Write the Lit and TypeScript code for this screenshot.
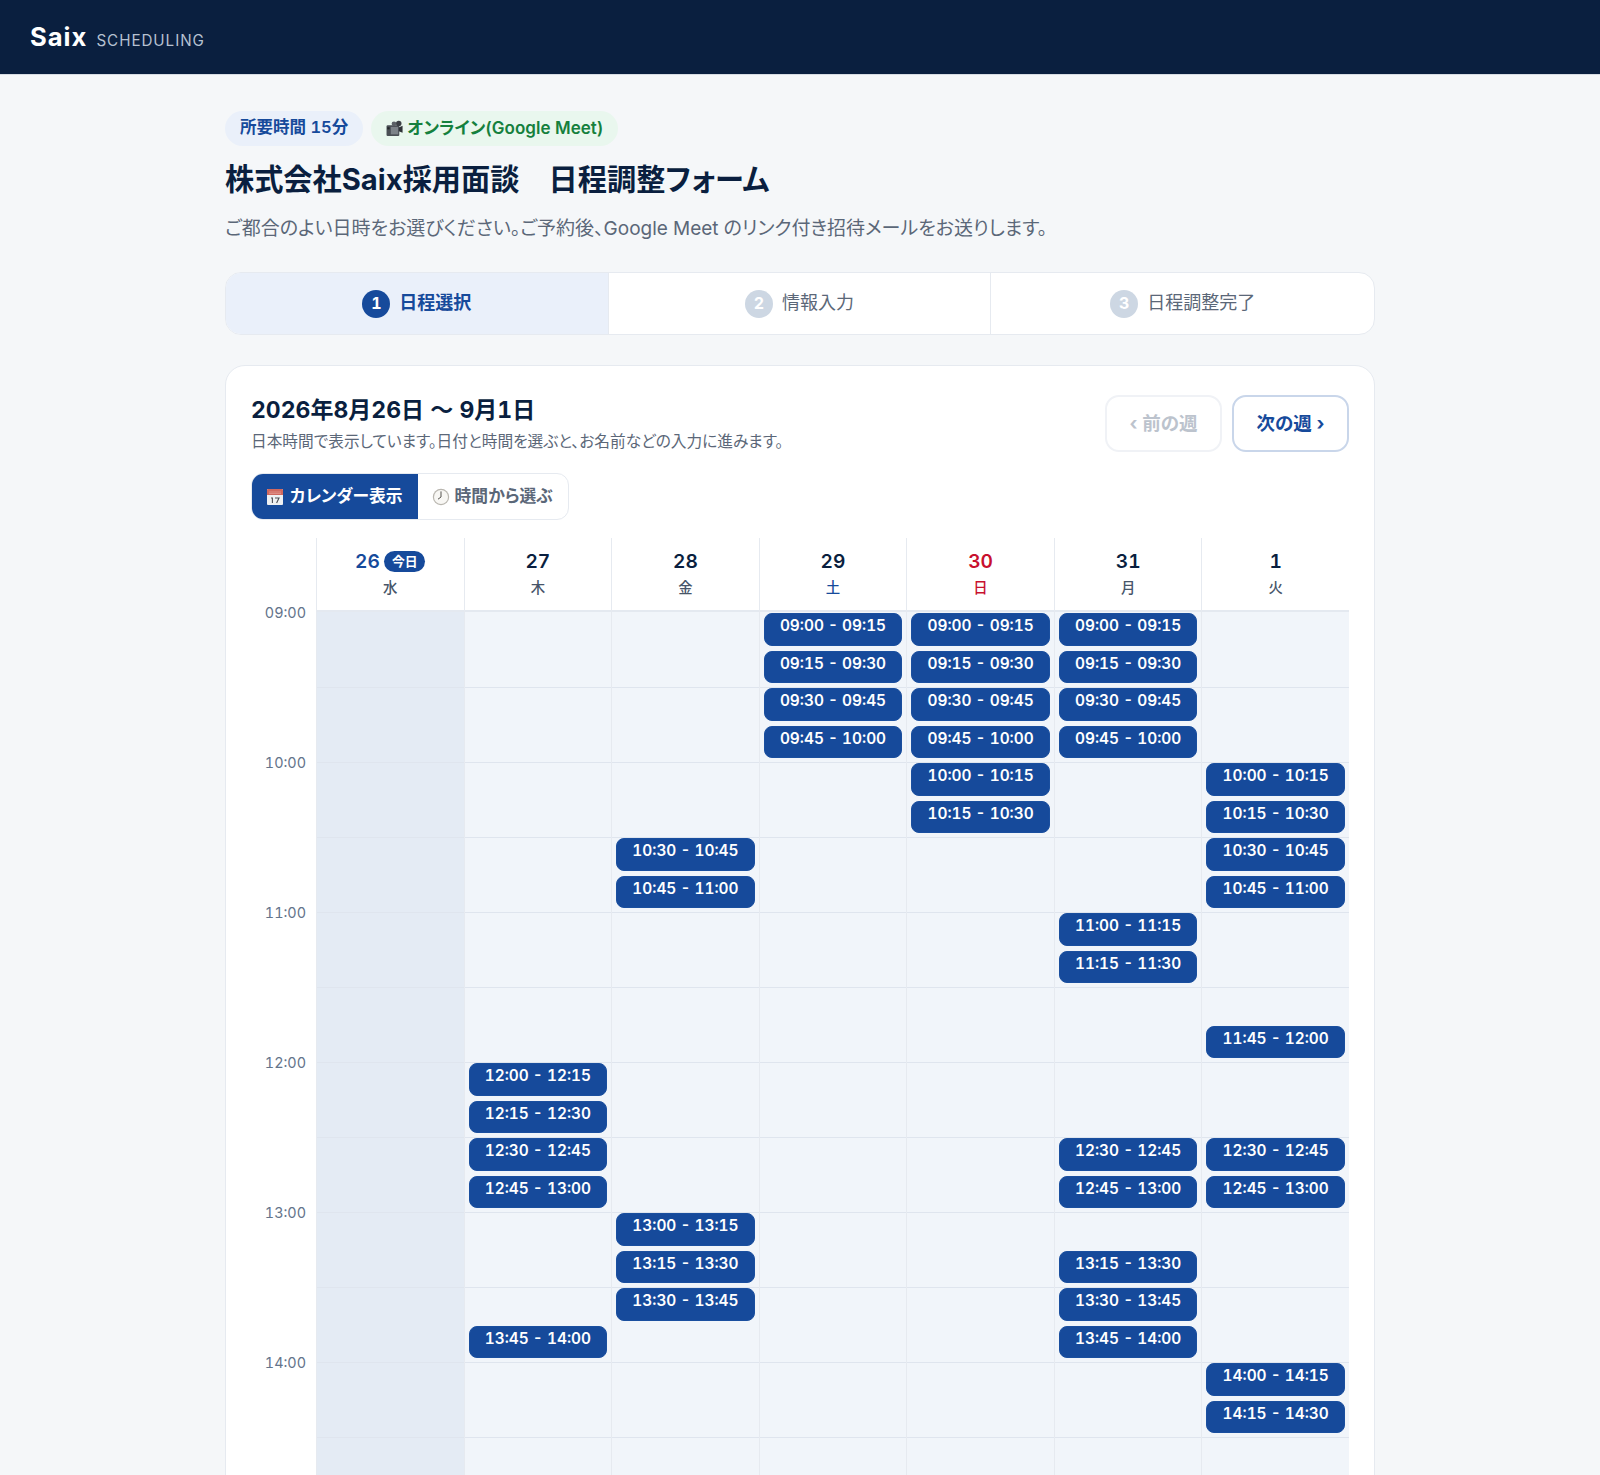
import { LitElement, html, css, svg, nothing } from "lit";
import { customElement } from "lit/decorators.js";

const SLOT_COUNT = 24;
const START_MIN = 9 * 60;
const fmt = (m: number) =>
  `${String(Math.floor(m / 60)).padStart(2, "0")}:${String(m % 60).padStart(2, "0")}`;
const idx = (t: string) => {
  const [h, m] = t.split(":").map(Number);
  return (h * 60 + m - START_MIN) / 15;
};

const days = [
  { n: "26", w: "水", kind: "today", slots: [] as string[] },
  { n: "27", w: "木", kind: "", slots: ["12:00", "12:15", "12:30", "12:45", "13:45"] },
  { n: "28", w: "金", kind: "", slots: ["10:30", "10:45", "13:00", "13:15", "13:30"] },
  { n: "29", w: "土", kind: "sat", slots: ["09:00", "09:15", "09:30", "09:45"] },
  { n: "30", w: "日", kind: "sun", slots: ["09:00", "09:15", "09:30", "09:45", "10:00", "10:15"] },
  { n: "31", w: "月", kind: "", slots: ["09:00", "09:15", "09:30", "09:45", "11:00", "11:15", "12:30", "12:45", "13:15", "13:30", "13:45"] },
  { n: "1", w: "火", kind: "", slots: ["10:00", "10:15", "10:30", "10:45", "11:45", "12:30", "12:45", "14:00", "14:15"] },
];

const cameraIcon = svg`<svg class="emoji" viewBox="0 0 16 16" width="17" height="17" aria-hidden="true">
  <rect x="0.5" y="5" width="12" height="10" rx="1" fill="#4a4f55"/>
  <rect x="4.5" y="6.5" width="7" height="7" fill="#7c8288"/>
  <circle cx="12" cy="3.2" r="2.6" fill="#3c4046"/>
  <circle cx="7.5" cy="3.6" r="2.2" fill="#5b6066"/>
  <path d="M12 7l3.6-1.5v6.5L12 10.5z" fill="#2f3338"/>
  <rect x="1.2" y="6.8" width="2.2" height="2" fill="#23262a"/>
</svg>`;
const calendarIcon = svg`<svg class="emoji" viewBox="0 0 18 18" width="18" height="18" aria-hidden="true">
  <rect x="1" y="1" width="16" height="16" rx="1" fill="#eef0f2"/>
  <path d="M1 2a1 1 0 0 1 1-1h14a1 1 0 0 1 1 1v5H1z" fill="#d0685f"/>
  <path d="M3 4h12M3 5.5h12" stroke="#e8a49e" stroke-width=".6"/>
  <path d="M5 10h1.4v5M9 10h4l-2.4 5" fill="none" stroke="#4c4f54" stroke-width="1.1"/>
</svg>`;
const clockIcon = svg`<svg class="emoji" viewBox="0 0 18 18" width="18" height="18" aria-hidden="true">
  <circle cx="9" cy="9" r="8.2" fill="#b9b6af"/>
  <circle cx="9" cy="9" r="7" fill="#f8f7f4"/>
  <path d="M9 9V3.4M9 9L6 11.2" stroke="#55534f" stroke-width="1" fill="none"/>
</svg>`;

@customElement("app-root")
export class AppRoot extends LitElement {
  static styles = css`
    :host {
      display: block;
      height: 1475px;
      overflow: hidden;
      background: #f5f7f9;
      color: #0a1f3f;
      font-family: "Inter", "Noto Sans CJK JP", sans-serif;
      font-feature-settings: "palt", "tnum";
    }
    * { box-sizing: border-box; }
    .top {
      height: 75px;
      background: #0a1f3f;
      border-bottom: 1px solid #d7dce3;
      display: flex;
      align-items: baseline;
      gap: 9px;
      padding: 20px 30px 0;
    }
    .logo { color: #fff; font-size: 25.6px; font-weight: 700; letter-spacing: 1px; line-height: 34px; }
    .sub { color: #b6c1d1; font-size: 15.2px; letter-spacing: 0.95px; }
    main {
      width: 1150px;
      margin: 0 auto;
      padding-top: 36px;
      display: flex;
      flex-direction: column;
    }
    .pills { display: flex; gap: 8px; }
    .pill {
      height: 35px;
      border-radius: 18px;
      padding: 0 15px 5px;
      display: flex;
      align-items: center;
      gap: 4px;
      font-size: 16.5px;
      font-weight: 600;
    }
    .pill .emoji { margin-top: 5px; }
    .pill.blue { background: #eaf0fa; color: #164a9b; }
    .pill.green { background: #e9f7ee; color: #15803d; font-size: 17px; }
    h1 {
      margin: 13px 0 0;
      font-size: 29.2px;
      line-height: 42px;
      font-weight: 700;
    }
    .lead { margin: 14px 0 0; font-size: 19px; line-height: 28px; color: #5b6778; }
    .steps {
      margin-top: 29px;
      height: 63px;
      display: grid;
      grid-template-columns: repeat(3, 1fr);
      background: #fff;
      border: 1px solid #e6eaf0;
      border-radius: 16px;
      overflow: hidden;
    }
    .step {
      display: flex;
      align-items: center;
      justify-content: center;
      gap: 9px;
      font-size: 18px;
      color: #5b6778;
      border-right: 1px solid #e6eaf0;
      line-height: 24px;
    }
    .step > b { font-weight: inherit; margin-top: -2px; }
    .step:last-child { border-right: 0; }
    .step.on { background: #eaf0fa; color: #164a9b; font-weight: 700; }
    .num {
      width: 28px;
      height: 28px;
      border-radius: 50%;
      background: #cdd7e3;
      color: #fff;
      font-size: 16px;
      font-weight: 700;
      padding-bottom: 2px;
      display: flex;
      align-items: center;
      justify-content: center;
    }
    .step.on .num { background: #164a9b; }
    .card {
      margin-top: 30px;
      background: #fff;
      border: 1px solid #e6eaf0;
      border-radius: 20px;
      padding: 29px 25px 25px;
    }
    .head { display: flex; justify-content: space-between; align-items: flex-start; }
    h2 { margin: 0; font-size: 23px; line-height: 30px; font-weight: 700; }
    .note { margin: 6px 0 0; font-size: 15.7px; line-height: 22px; color: #5b6778; }
    .nav { display: flex; gap: 10px; }
    .nav button {
      width: 117px;
      height: 57px;
      border-radius: 14px;
      background: #fff;
      border: 2px solid #c9d6ea;
      color: #164a9b;
      font: inherit;
      font-size: 18.5px;
      font-weight: 700;
      padding: 0 0 4px;
    }
    .nav button[disabled] { border-color: #f0f2f6; color: #bcc3cd; }
    .toggle {
      margin-top: 20px;
      display: inline-flex;
      height: 47px;
      border: 1px solid #e6eaf0;
      border-radius: 12px;
      overflow: hidden;
      vertical-align: top;
    }
    .toggle span {
      display: flex;
      align-items: center;
      gap: 5px;
      padding: 0 15px 3px 14px;
      font-size: 16.8px;
      font-weight: 700;
      color: #5b6778;
    }
    .toggle .emoji { margin-top: 3px; }
    .toggle span.on { background: #164a9b; color: #fff; gap: 6px; }
    .emoji { flex: none; }
    .cal {
      margin-top: 18px;
      display: grid;
      grid-template-columns: 65px repeat(7, 1fr);
    }
    .dh {
      height: 74px;
      border-left: 1px solid #e6eaf0;
      border-bottom: 2px solid #e4e9f0;
      display: flex;
      flex-direction: column;
      align-items: center;
      padding-top: 10px;
    }
    .dn {
      display: flex;
      align-items: center;
      gap: 4px;
      font-size: 19.2px;
      font-weight: 600;
      line-height: 26px;
    }
    .dw { margin-top: 3px; font-size: 14.4px; line-height: 22px; font-weight: 500; color: #475569; }
    .today .dn, .sat .dw { color: #164a9b; }
    .sun .dn, .sun .dw { color: #c8102e; }
    .badge {
      background: #164a9b;
      color: #fff;
      font-size: 12.8px;
      line-height: 21px;
      font-weight: 600;
      padding: 0 8px;
      border-radius: 11px;
    }
    .times { display: flex; flex-direction: column; }
    .t {
      height: 150px;
      flex: none;
      text-align: right;
      padding-right: 10px;
      font-size: 14.4px;
      line-height: 20px;
      color: #64748b;
    }
    .t span { display: block; margin-top: -9px; }
    .col {
      display: grid;
      grid-auto-rows: 37.5px;
      background: #f1f5fa;
      border-left: 1px solid #e6eaf0;
    }
    .col.today { background: #e4ebf4; }
    .c { padding: 1px 4px 4px; min-width: 0; }
    .c.line { border-top: 1px solid #dfe5ee; padding-top: 0; }
    .c button {
      width: 100%;
      height: 100%;
      border: 1px solid #1a4f9f;
      border-radius: 8px;
      background: #164a9b;
      color: #fff;
      font: inherit;
      font-size: 15.4px;
      font-weight: 600;
      line-height: 22px;
      padding: 1px 0 0;
      margin: 0;
      display: flex;
      justify-content: center;
      align-items: flex-start;
    }
  `;

  render() {
    return html`
      <header class="top"><span class="logo">Saix</span><span class="sub">SCHEDULING</span></header>
      <main>
        <div class="pills">
          <span class="pill blue">所要時間 15分</span>
          <span class="pill green">${cameraIcon}オンライン(Google Meet)</span>
        </div>
        <h1>株式会社Saix採用面談　日程調整フォーム</h1>
        <p class="lead">ご都合のよい日時をお選びください。ご予約後、Google Meet のリンク付き招待メールをお送りします。</p>
        <div class="steps">
          <div class="step on"><span class="num">1</span><b>日程選択</b></div>
          <div class="step"><span class="num">2</span><b>情報入力</b></div>
          <div class="step"><span class="num">3</span><b>日程調整完了</b></div>
        </div>
        <section class="card">
          <div class="head">
            <div>
              <h2>2026年8月26日 〜 9月1日</h2>
              <p class="note">日本時間で表示しています。日付と時間を選ぶと、お名前などの入力に進みます。</p>
            </div>
            <div class="nav">
              <button disabled>‹ 前の週</button>
              <button>次の週 ›</button>
            </div>
          </div>
          <div class="toggle">
            <span class="on">${calendarIcon}カレンダー表示</span>
            <span>${clockIcon}時間から選ぶ</span>
          </div>
          <div class="cal">
            <div></div>
            ${days.map(
              (d) => html`<div class="dh ${d.kind}">
                <div class="dn">${d.n}${d.kind === "today" ? html`<span class="badge">今日</span>` : nothing}</div>
                <div class="dw">${d.w}</div>
              </div>`
            )}
            <div class="times">
              ${[9, 10, 11, 12, 13, 14].map(
                (h) => html`<div class="t"><span>${String(h).padStart(2, "0")}:00</span></div>`
              )}
            </div>
            ${days.map((d) => {
              const set = new Set(d.slots.map(idx));
              return html`<div class="col ${d.kind === "today" ? "today" : ""}">
                ${Array.from({ length: SLOT_COUNT }, (_, i) => {
                  const start = START_MIN + i * 15;
                  return html`<div class="c ${i % 2 === 0 && i > 0 ? "line" : ""}">
                    ${set.has(i) ? html`<button>${fmt(start)} - ${fmt(start + 15)}</button>` : nothing}
                  </div>`;
                })}
              </div>`;
            })}
          </div>
        </section>
      </main>
    `;
  }
}
